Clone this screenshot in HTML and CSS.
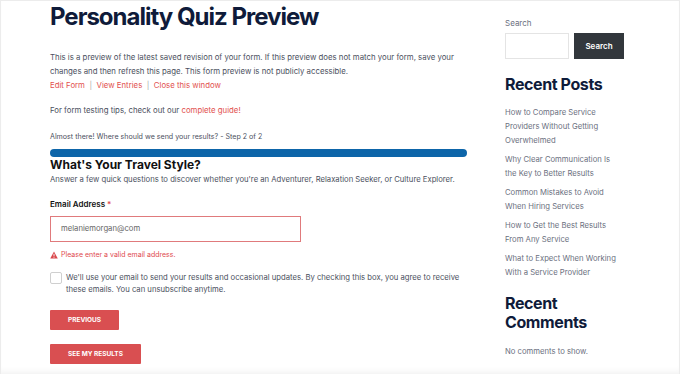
FILE: index.html
```html
<!DOCTYPE html>
<html lang="en">
<head>
<meta charset="utf-8">
<title>Personality Quiz Preview</title>
<link rel="stylesheet" href="styles.css">
</head>
<body>
<div class="frame">
  <div class="layout">
    <main class="main">
      <h1 class="title">Personality Quiz Preview</h1>
      <p class="intro">This is a preview of the latest saved revision of your form. If this preview does not match your form, save your changes and then refresh this page. This form preview is not publicly accessible.<br>
        <a class="link" href="#">Edit Form</a><span class="sep">|</span><a class="link" href="#">View Entries</a><span class="sep">|</span><a class="link" href="#">Close this window</a></p>
      <p class="tips">For form testing tips, check out our <a class="link" href="#">complete guide!</a></p>

      <div class="step">Almost there! Where should we send your results? - Step 2 of 2</div>
      <div class="progress"><div class="progress-fill"></div></div>
      <h3 class="form-title">What's Your Travel Style?</h3>
      <p class="form-desc">Answer a few quick questions to discover whether you're an Adventurer, Relaxation Seeker, or Culture Explorer.</p>

      <label class="field-label">Email Address <span class="req">*</span></label>
      <div class="input-error">melaniemorgan@com</div>
      <div class="error-msg">
        <svg class="warn" viewBox="0 0 16 16" width="8" height="8"><path d="M8 1 L15.5 15 H0.5 Z" fill="#d9474b"/><rect x="7.1" y="5.5" width="1.8" height="5" fill="#fff"/><rect x="7.1" y="11.6" width="1.8" height="1.8" fill="#fff"/></svg>
        Please enter a valid email address.
      </div>

      <div class="consent">
        <span class="checkbox"></span>
        <span class="consent-text">We'll use your email to send your results and occasional updates. By checking this box, you agree to receive these emails. You can unsubscribe anytime.</span>
      </div>

      <div class="buttons">
        <button class="btn btn-prev">PREVIOUS</button>
        <button class="btn btn-submit">SEE MY RESULTS</button>
      </div>
    </main>

    <aside class="sidebar">
      <div class="search-label">Search</div>
      <div class="search-row">
        <div class="search-input"></div>
        <button class="search-btn">Search</button>
      </div>
      <h2 class="widget-title">Recent Posts</h2>
      <ul class="posts">
        <li><a href="#">How to Compare Service Providers Without Getting Overwhelmed</a></li>
        <li><a href="#">Why Clear Communication Is the Key to Better Results</a></li>
        <li><a href="#">Common Mistakes to Avoid When Hiring Services</a></li>
        <li><a href="#">How to Get the Best Results From Any Service</a></li>
        <li><a href="#">What to Expect When Working With a Service Provider</a></li>
      </ul>
      <h2 class="widget-title comments-title">Recent Comments</h2>
      <p class="no-comments">No comments to show.</p>
    </aside>
  </div>
</div>
</body>
</html>
```

FILE: styles.css
```css
* { box-sizing: border-box; }
html, body { margin: 0; padding: 0; background: #fff; }
body {
  font-family: Inter, "Noto Sans", Arial, sans-serif;
  color: #4b5060;
  font-size: 8px;
  line-height: 14px;
  height: 374px;
  overflow: hidden;
}
.frame {
  height: 374px;
  border: 1px solid #ececec;
  border-bottom: none;
  box-shadow: inset 0 -6px 6px -4px rgba(0,0,0,0.06);
}
.layout {
  display: flex;
  padding-left: 49px;
}
.main { width: 417px; }
.title {
  margin: 0;
  font-size: 24px;
  line-height: 32px;
  font-weight: 700;
  color: #0f1b3a;
  letter-spacing: -1px;
}
.intro { margin: 17px 0 0; font-size: 7.8px; }
.link { color: #e2514f; text-decoration: none; }
.sep { color: #aaa; margin: 0 4.5px; }
.tips { margin: 11px 0 0; font-size: 7.8px; }
.step { margin-top: 13px; font-size: 7.1px; }
.progress {
  margin-top: 5px;
  height: 8px;
  border-radius: 4px;
  background: #0d65a9;
}
.form-title {
  margin: 0;
  font-size: 12px;
  line-height: 15px;
  font-weight: 700;
  color: #111;
}
.form-desc { margin: 1px 0 0; font-size: 7.7px; }
.field-label {
  display: block;
  margin-top: 10px;
  font-weight: 600;
  color: #111;
}
.req { color: #e0484e; }
.input-error {
  margin-top: 5px;
  width: 251px;
  height: 26px;
  border: 1px solid #e07a7c;
  padding: 0 10px;
  line-height: 24px;
  color: #666;
  font-size: 7.7px;
}
.error-msg {
  margin-top: 6px;
  color: #e0484e;
  font-size: 7px;
  display: flex;
  align-items: center;
  gap: 3px;
}
.consent {
  margin-top: 10px;
  display: flex;
  gap: 4px;
  line-height: 12px;
  font-size: 7.7px;
}
.checkbox {
  flex: none;
  width: 12px;
  height: 12px;
  border: 1px solid #cfcfcf;
  border-radius: 2px;
  margin-top: 0;
}
.consent-text { width: 405px; }
.buttons { display: flex; flex-direction: column; align-items: flex-start; gap: 14px; margin-top: 14px; }
.btn {
  border: none;
  background: #d94f51;
  color: #fff;
  font-family: inherit;
  font-weight: 700;
  font-size: 6.5px;
  height: 20px;
  padding: 0 18px;
  border-radius: 1px;
}
.sidebar { margin-left: 38px; width: 120px; padding-top: 15px; }
.search-label { color: #6b7080; }
.search-row { display: flex; gap: 5px; margin-top: 3px; }
.search-input { width: 64px; height: 26px; border: 1px solid #e4e4e4; }
.search-btn {
  width: 50px; height: 26px;
  background: #32373c;
  color: #fff;
  border: none;
  font-family: inherit;
  font-weight: 600;
  font-size: 8px;
}
.widget-title {
  margin: 16px 0 0;
  font-size: 16px;
  line-height: 19px;
  font-weight: 700;
  color: #0f1b3a;
  letter-spacing: -0.4px;
}
.posts { list-style: none; padding: 0; margin: 12px 0 0; font-size: 7.7px; width: 115px; }
.posts li { margin-bottom: 5px; }
.posts a { color: #6b7080; text-decoration: none; }
.comments-title { margin-top: 14px; }
.no-comments { margin: 13px 0 0; color: #6b7080; font-size: 7.7px; }
```
